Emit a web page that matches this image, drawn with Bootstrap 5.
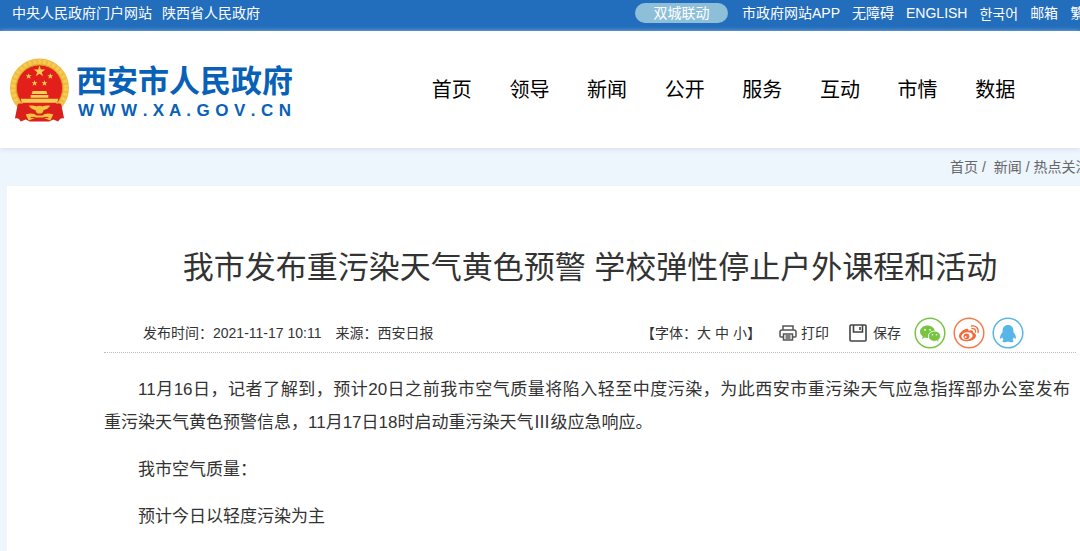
<!DOCTYPE html>
<html lang="zh-CN">
<head>
<meta charset="utf-8">
<meta name="viewport" content="width=device-width, initial-scale=1">
<title>我市发布重污染天气黄色预警 学校弹性停止户外课程和活动</title>
<link href="https://cdn.jsdelivr.net/npm/bootstrap@5.3.0/dist/css/bootstrap.min.css" rel="stylesheet">
<style>
body{font-family:"Liberation Sans","Noto Sans CJK SC",sans-serif;font-size:14px;line-height:20px;color:#333;background:#edf5fd;overflow-x:hidden}
a{color:inherit;text-decoration:none}
.topbar{background:#226dbc;color:#fff;height:31px;padding:3px 0 8px 12px;overflow:hidden}
.topbar-sites{gap:10px}
.topbar-tools{gap:12px;flex:0 0 445px;overflow:hidden}
.pill{background:#8ebfd9;width:93px;line-height:20px;margin-right:2px;flex-shrink:0}
.ko{font-family:"Noto Sans CJK KR",sans-serif}
.masthead{background:#fff;height:117px;box-shadow:0 1px 5px #cfdfec;padding:0 46px 0 9px}
.brand{gap:6px;color:#0861b7;width:284px}
.brand-text{padding-top:6px}
.brand-name{font-size:31px;line-height:36px;font-weight:700;white-space:nowrap}
.brand-url{font-weight:700;font-size:17px;line-height:22px;text-align-last:justify;padding:0 2px}
.mainnav{margin-left:120px;font-size:20px;line-height:28px;color:#000}
.crumbs{height:38px;padding-top:9px;color:#666}
.crumbs ol{flex:0 0 130px;overflow:hidden;margin:0;padding:0;list-style:none}
.article{background:#fff;margin-left:7px;padding:58px 4px 4px 97px}
.headline{font-size:31px;line-height:48px;margin:0 0 24px}
.meta{border-bottom:1px dotted #bbb;padding:0 52px 2px 39px;margin-bottom:20px;height:37px}
.meta button{border:0;background:none;padding:0;color:inherit}
.source{gap:14px}
.sizes{margin-right:18px}
.sizes .pick{gap:4px}
.tool{gap:4px;margin-right:20px}
.save{gap:6px;margin-right:13px}
.share{gap:7px}
.story{padding-right:6px}
.story p{font-size:17px;line-height:33px;text-indent:2em;margin:0 0 14px;text-align:justify}
.numeral{font-family:"Noto Sans CJK SC",sans-serif;line-height:20px}
</style>
</head>
<body>
<div class="topbar d-flex align-items-center justify-content-between text-nowrap">
  <div class="topbar-sites d-flex"><a href="#">中央人民政府门户网站</a><a href="#">陕西省人民政府</a></div>
  <div class="topbar-tools d-flex">
    <a href="#" class="pill rounded-pill text-center">双城联动</a>
    <a href="#">市政府网站APP</a><a href="#">无障碍</a><a href="#">ENGLISH</a><a href="#" class="ko" lang="ko">한국어</a><a href="#">邮箱</a><a href="#">繁</a>
  </div>
</div>
<header class="masthead d-flex align-items-center position-relative">
  <a href="#" class="brand d-flex align-items-center flex-shrink-0">
    <svg width="62" height="66" viewBox="0 0 62 66" aria-hidden="true">
      <circle cx="31" cy="31" r="30" fill="#eebb3c"/>
      <circle cx="31" cy="31" r="27" fill="none" stroke="#f5cb55" stroke-width="4" stroke-dasharray="3 2"/>
      <circle cx="31" cy="31" r="23.500" fill="#e21f1b" stroke="#d99a2b"/>
      <g fill="#f8cf55">
        <path d="m31 8 1.400 4.200h4.400l-3.500 2.700 1.300 4.200-3.600-2.500-3.600 2.500 1.300-4.200-3.500-2.700h4.400z"/>
        <path d="m20 16 .8 2h2.200l-1.700 1.400.6 2.200-1.900-1.300-1.900 1.300.6-2.200-1.700-1.400h2.200zM42 16l.8 2H45l-1.700 1.400.6 2.200-1.900-1.300-1.900 1.300.6-2.200-1.700-1.400h2.200zM26 23l.8 2H29l-1.700 1.400.6 2.200-1.900-1.300-1.900 1.300.6-2.200-1.700-1.400h2.200zM36 23l.8 2H39l-1.700 1.400.6 2.200-1.900-1.300-1.900 1.300.6-2.200-1.700-1.400h2.200z"/>
        <path d="M24 34h14l1 3H23zM22 38h18v3H22zM12 42h38l-1 4H13z"/>
      </g>
      <path d="M9 47c5-1 8 1 12 3l10 5 10-5c4-2 7-4 12-3l3 15c-3-1-4 0-6 3l-5-2-4 2H21l-4-2-5 2c-2-3-3-4-6-3z" fill="#d9201c"/>
      <path d="M20 49q8-1 11 3 3-4 11-3l-3 3-8 3-8-3z" fill="#f5c744"/>
      <circle cx="31" cy="53" r="4" fill="#f5c23e"/>
      <path d="M17 58c5-2 9-1 11 1h6c2-2 6-3 11-1l-3 6-8-3h-6l-8 3z" fill="#f4c33f"/>
      <path d="M22 61h5M35 61h5" stroke="#d9201c"/>
    </svg>
    <span class="brand-text flex-fill"><span class="brand-name d-block">西安市人民政府</span><span class="brand-url d-block">W W W . X A . G O V . C N</span></span>
  </a>
  <nav class="mainnav nav nav-justified flex-fill flex-nowrap text-nowrap" aria-label="主导航">
    <a class="nav-item" href="#">首页</a><a class="nav-item" href="#">领导</a><a class="nav-item" href="#">新闻</a><a class="nav-item" href="#">公开</a><a class="nav-item" href="#">服务</a><a class="nav-item" href="#">互动</a><a class="nav-item" href="#">市情</a><a class="nav-item" href="#">数据</a>
  </nav>
</header>
<nav class="crumbs d-flex justify-content-end text-nowrap" aria-label="当前位置">
  <ol class="d-flex gap-1"><li><a href="#">首页</a> /</li><li class="ms-1"><a href="#">新闻</a> /</li><li><a href="#">热点关注</a></li></ol>
</nav>
<main class="article">
  <h1 class="headline text-center fw-normal">我市发布重污染天气黄色预警 学校弹性停止户外课程和活动</h1>
  <div class="meta d-flex align-items-center justify-content-between text-nowrap">
    <div class="source d-flex"><span>发布时间：2021-11-17 10:11</span><span>来源：西安日报</span></div>
    <div class="d-flex align-items-center">
      <div class="sizes d-flex"><span>【字体：</span><span class="pick d-flex"><button type="button">大</button><button type="button">中</button><button type="button">小</button></span><span>】</span></div>
      <button type="button" class="tool d-flex align-items-center">
        <svg width="18" height="16" viewBox="0 0 18 16" fill="none" stroke="#555" stroke-width="1.500" aria-hidden="true"><path d="M4 5V1h10v4M4 12H2q-1 0-1-1V7q0-2 2-2h12q2 0 2 2v4q0 1-1 1h-2M4.500 9h9v6h-9zM6.500 11h5M6.500 13h5"/></svg>打印</button>
      <button type="button" class="save d-flex align-items-center">
        <svg width="18" height="18" viewBox="0 0 18 18" fill="none" stroke="#444" stroke-width="1.600" aria-hidden="true"><path d="M1 2q0-1 1-1h14q1 0 1 1v14q0 1-1 1H2q-1 0-1-1zM4.500 1v7h9V1M11 3v3"/></svg>保存</button>
      <div class="share d-flex">
        <a href="#" aria-label="微信"><svg class="d-block" width="32" height="32" viewBox="0 0 32 32" aria-hidden="true"><circle cx="16" cy="16" r="14.800" fill="#fff" stroke="#78c442" stroke-width="1.500"/><path d="M13.500 8.500c-4.200 0-7.500 2.700-7.500 6.100 0 2 1.100 3.700 2.800 4.800L8 22l2.800-1.500q1.600.5 3.300.4c-.8-4 2.700-7.300 6.800-7.200-.8-3-3.800-5.200-7.400-5.200z" fill="#78c442"/><path d="M20.500 14.200c-3.400 0-6 2.200-6 5s2.600 5 6 5q1.200 0 2.200-.4L25 25l-.6-2.200c1.300-.9 2.100-2.200 2.100-3.600 0-2.800-2.600-5-6-5z" fill="#78c442" stroke="#fff" stroke-width=".6"/><g fill="#fff"><circle cx="11" cy="12.800" r=".9"/><circle cx="16" cy="12.800" r=".9"/><circle cx="18.500" cy="17.700" r=".8"/><circle cx="22.500" cy="17.700" r=".8"/></g></svg></a>
        <a href="#" aria-label="微博"><svg class="d-block" width="32" height="32" viewBox="0 0 32 32" aria-hidden="true"><circle cx="16" cy="16" r="14.800" fill="#fff" stroke="#f67a4b" stroke-width="1.500"/><path d="M13.500 11.800c1.300-.4 2.300.2 2 2 2.600-1 5-.7 4.600 1.800 1.800.5 2.900 1.500 2.900 3 0 3.100-4 5.700-8.600 5.700S6 22.200 6 19.200c0-3 4.200-6.700 7.500-7.400z" fill="#f26b3a"/><ellipse cx="14" cy="19" rx="5.700" ry="3.800" fill="#fff" transform="rotate(-8 14 19)"/><circle cx="13.500" cy="19.300" r="2.900" fill="#f26b3a"/><circle cx="12.600" cy="20" r="1" fill="#fff"/><path d="M18.500 9c4-1 7.500 2 6.500 6.500M19 11.700c2.300-.6 4 1 3.500 3.300" fill="none" stroke="#f26b3a" stroke-width="1.300" stroke-linecap="round"/></svg></a>
        <a href="#" aria-label="QQ"><svg class="d-block" width="32" height="32" viewBox="0 0 32 32" aria-hidden="true"><circle cx="16" cy="16" r="14.800" fill="#fff" stroke="#56b6e7" stroke-width="1.500"/><path d="M16 8c-3.400 0-5.400 2.400-5.400 5.500V15c-1.900 2.200-3 4.700-2.400 6.800.5.300 1.300-.6 1.900-1.600q.4 1.400 1.500 2.500c-1.500.6-1.500 2.500.8 2.600q2 .1 3.600-.8 1.600.9 3.600.8c2.300-.1 2.300-2 .8-2.600q1.100-1.100 1.500-2.500c.6 1 1.400 1.900 1.900 1.600.6-2.100-.5-4.600-2.400-6.800v-1.500C21.400 10.400 19.400 8 16 8z" fill="#56b6e7"/></svg></a>
      </div>
    </div>
  </div>
  <div class="story">
    <p>11月16日，记者了解到，预计20日之前我市空气质量将陷入轻至中度污染，为此西安市重污染天气应急指挥部办公室发布<span class="text-nowrap">重污染天气</span>黄色预警信息，11月17日18时启动重污染天气<span class="numeral">Ⅲ</span>级应急响应。</p>
    <p>我市空气质量：</p>
    <p>预计今日以轻度污染为主</p>
  </div>
</main>
<script src="https://cdn.jsdelivr.net/npm/bootstrap@5.3.0/dist/js/bootstrap.bundle.min.js"></script>
</body>
</html>
